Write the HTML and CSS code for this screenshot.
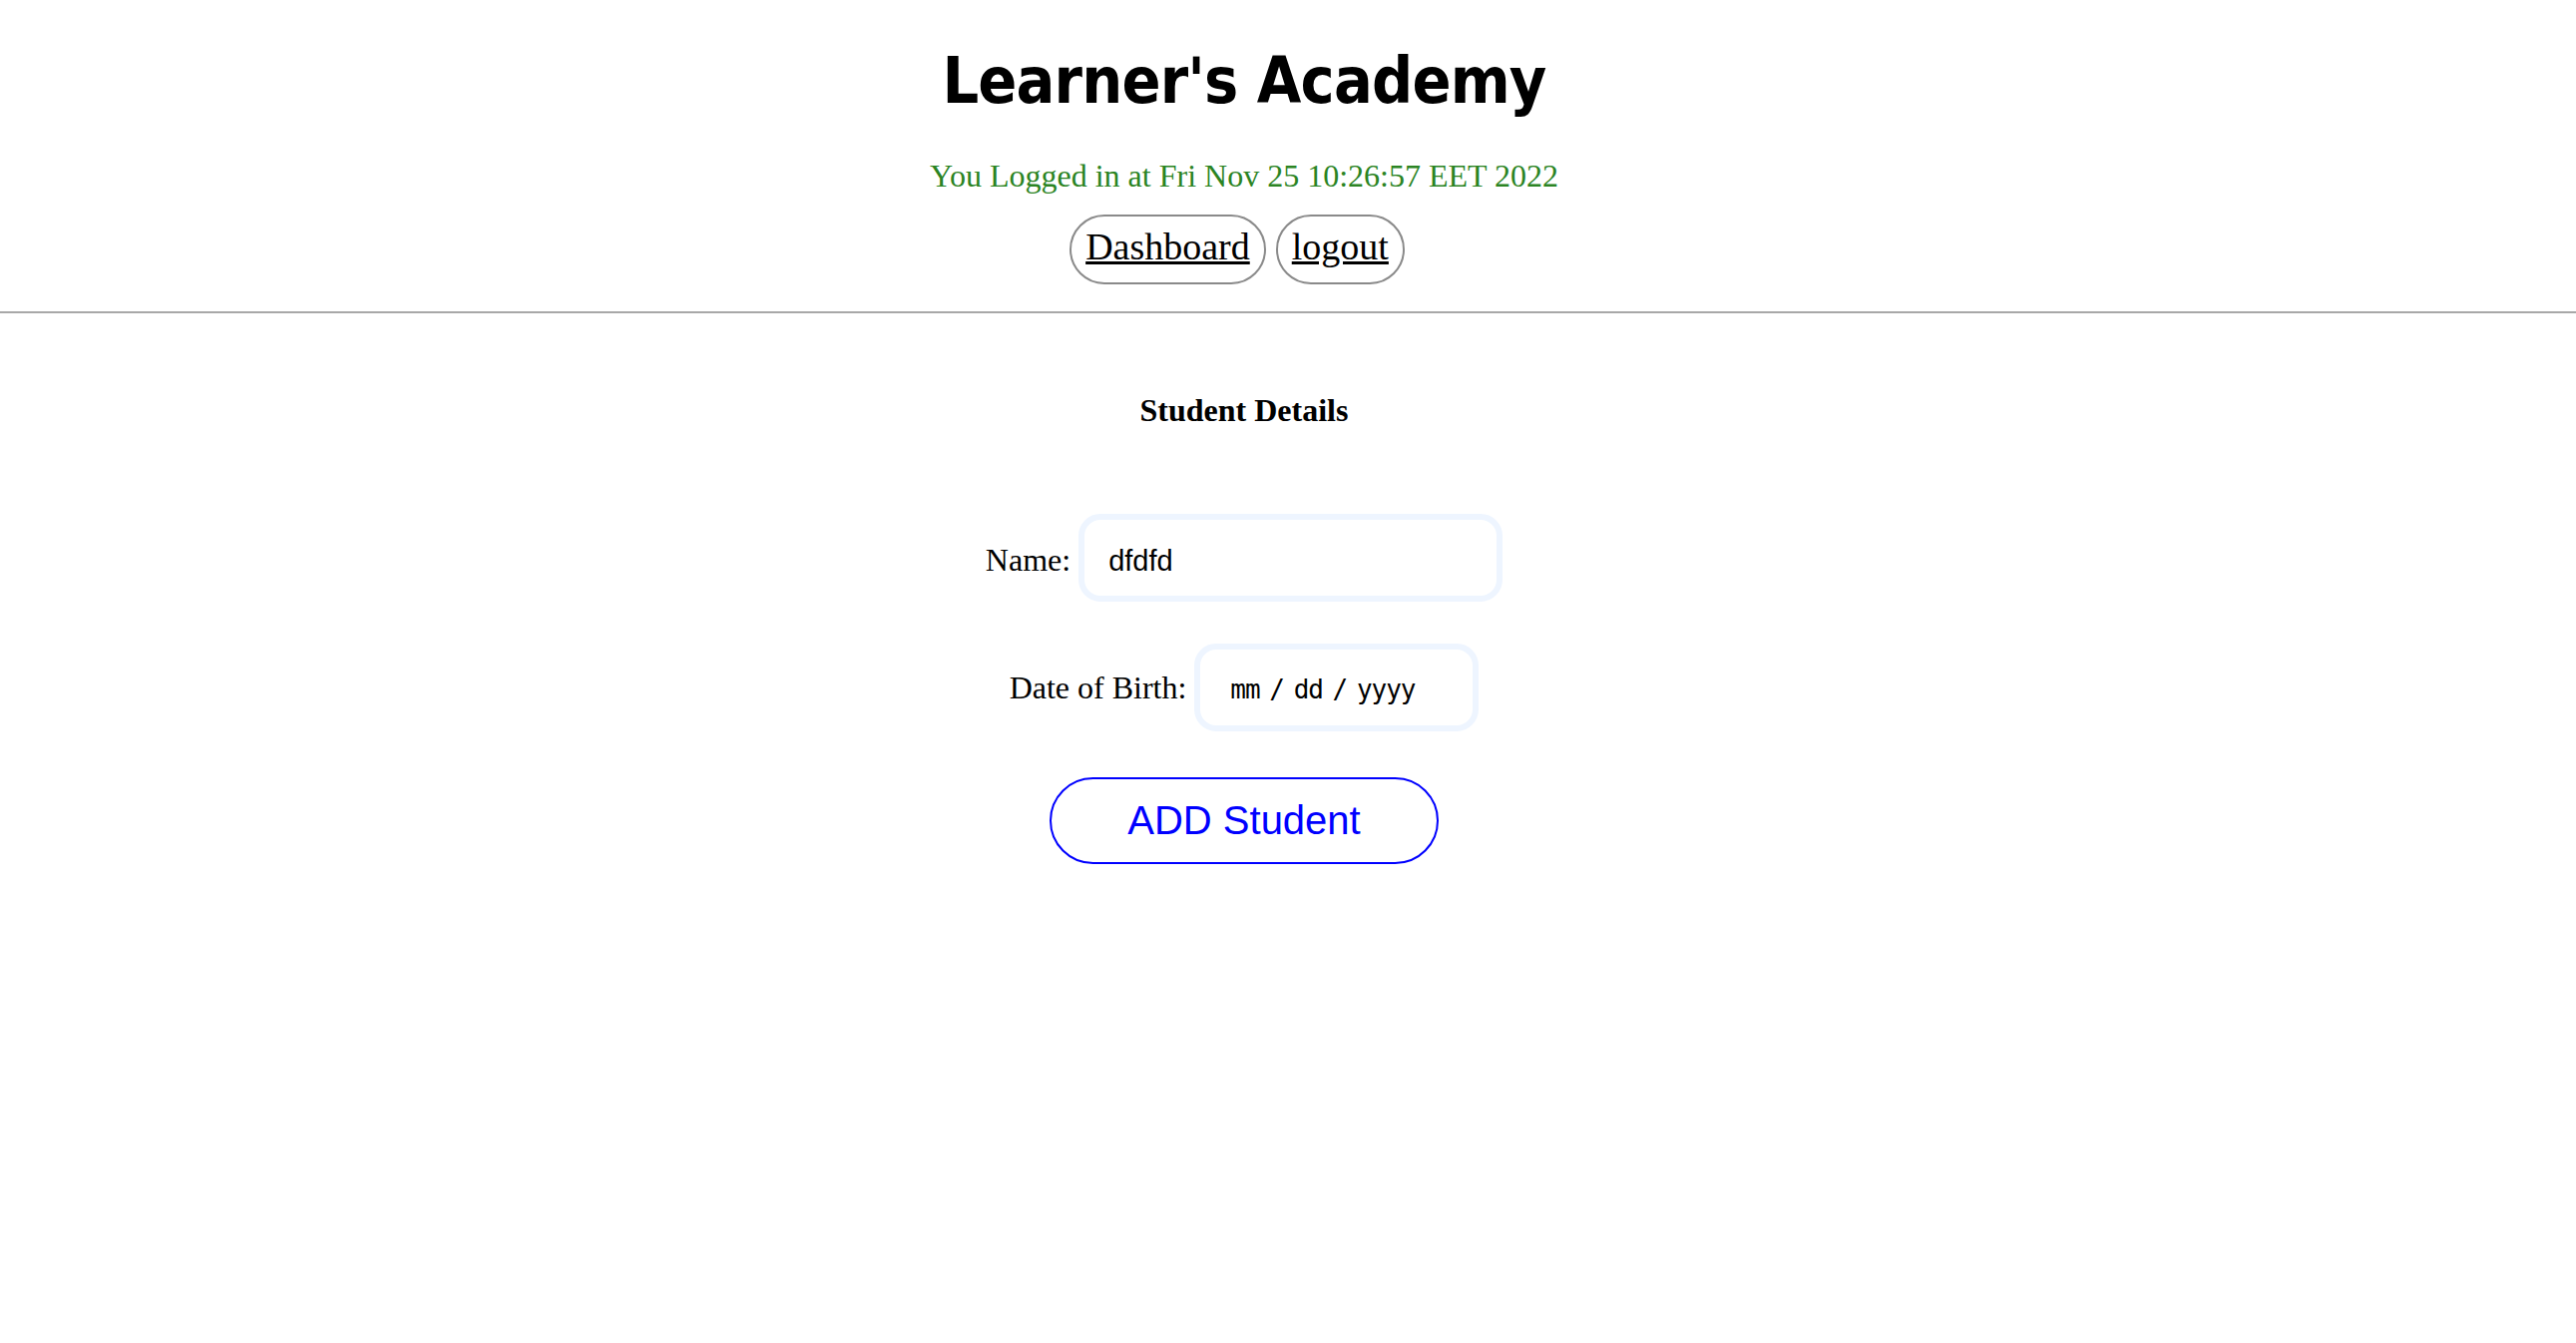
FILE: index.html
```html
<!DOCTYPE html>
<html lang="en">
<head>
<meta charset="utf-8">
<title>Learner's Academy - Add Student</title>
<link rel="stylesheet" href="styles.css">
</head>
<body>
<header class="header">
  <h1 class="title">Learner's Academy</h1>
  <p class="login-info">You Logged in at Fri Nov 25 10:26:57 EET 2022</p>
  <nav class="nav">
    <a class="nav-link" href="#">Dashboard</a>
    <a class="nav-link" href="#">logout</a>
  </nav>
</header>
<hr class="divider">
<main class="main">
  <h2 class="section-title">Student Details</h2>
  <form class="student-form">
    <div class="form-row">
      <label class="form-label" for="name">Name:</label>
      <input class="field field-name" id="name" type="text" value="dfdfd">
    </div>
    <div class="form-row">
      <label class="form-label" for="dob">Date of Birth:</label>
      <input class="field field-date" id="dob" type="text" placeholder="mm / dd / yyyy">
    </div>
    <div class="submit-row">
      <button class="add-button" type="button">ADD Student</button>
    </div>
  </form>
</main>
</body>
</html>
```

FILE: styles.css
```css
html, body {
  margin: 0;
  padding: 0;
  background: #ffffff;
}

body {
  font-family: "Liberation Serif", "Times New Roman", serif;
  color: #000000;
}

.header {
  padding-right: 88px;
  text-align: center;
}

.title {
  margin: 44px 0 0;
  font-family: "DejaVu Sans Condensed", "DejaVu Sans", sans-serif;
  font-stretch: condensed;
  font-weight: bold;
  font-size: 64px;
  line-height: 74px;
  letter-spacing: -0.8px;
}

.login-info {
  margin: 40px 0 0;
  font-size: 32px;
  line-height: 36px;
  color: #2b8423;
}

.nav {
  margin-top: 21px;
  display: flex;
  justify-content: center;
  gap: 10px;
  padding-right: 14px;
}

.nav-link {
  display: block;
  border: 2px solid #8a8a8a;
  border-radius: 40px;
  padding: 10px 14px 15px;
  font-size: 38px;
  line-height: 41px;
  color: #000000;
  text-decoration: underline;
}

.divider {
  margin: 27px 0 0;
  border: 0;
  height: 2px;
  background: #a8a8a8;
}

.main {
  padding-right: 88px;
}

.section-title {
  margin: 79px 0 0;
  text-align: center;
  font-size: 32px;
  line-height: 36px;
  font-weight: bold;
}

.student-form {
  margin-top: 86px;
}

.form-row {
  display: flex;
  justify-content: center;
  align-items: baseline;
  gap: 8px;
}

.form-row + .form-row {
  margin-top: 42px;
}

.form-label {
  font-size: 32px;
  line-height: 36px;
}

.field {
  box-sizing: border-box;
  height: 88px;
  border: 6px solid #eef5ff;
  border-radius: 22px;
  background: #ffffff;
  color: #000000;
  outline: none;
  margin: 0;
}

.field-name {
  width: 425px;
  padding: 6px 24px 0;
  font-family: "Liberation Sans", Arial, sans-serif;
  font-size: 29px;
}

.field-date {
  width: 285px;
  padding: 3px 10px 0 30px;
  font-family: "DejaVu Sans Mono", monospace;
  font-size: 26px;
  letter-spacing: -1px;
  word-spacing: -5px;
}

.field-date::placeholder {
  color: #000000;
  opacity: 1;
}

.submit-row {
  margin-top: 46px;
  display: flex;
  justify-content: center;
}

.add-button {
  font-family: "Liberation Sans", Arial, sans-serif;
  font-size: 40px;
  line-height: 46px;
  color: #0000ff;
  background: #ffffff;
  border: 2px solid #0000ff;
  border-radius: 44px;
  padding: 18px 76px 19px;
  margin: 0;
  cursor: pointer;
}
```
